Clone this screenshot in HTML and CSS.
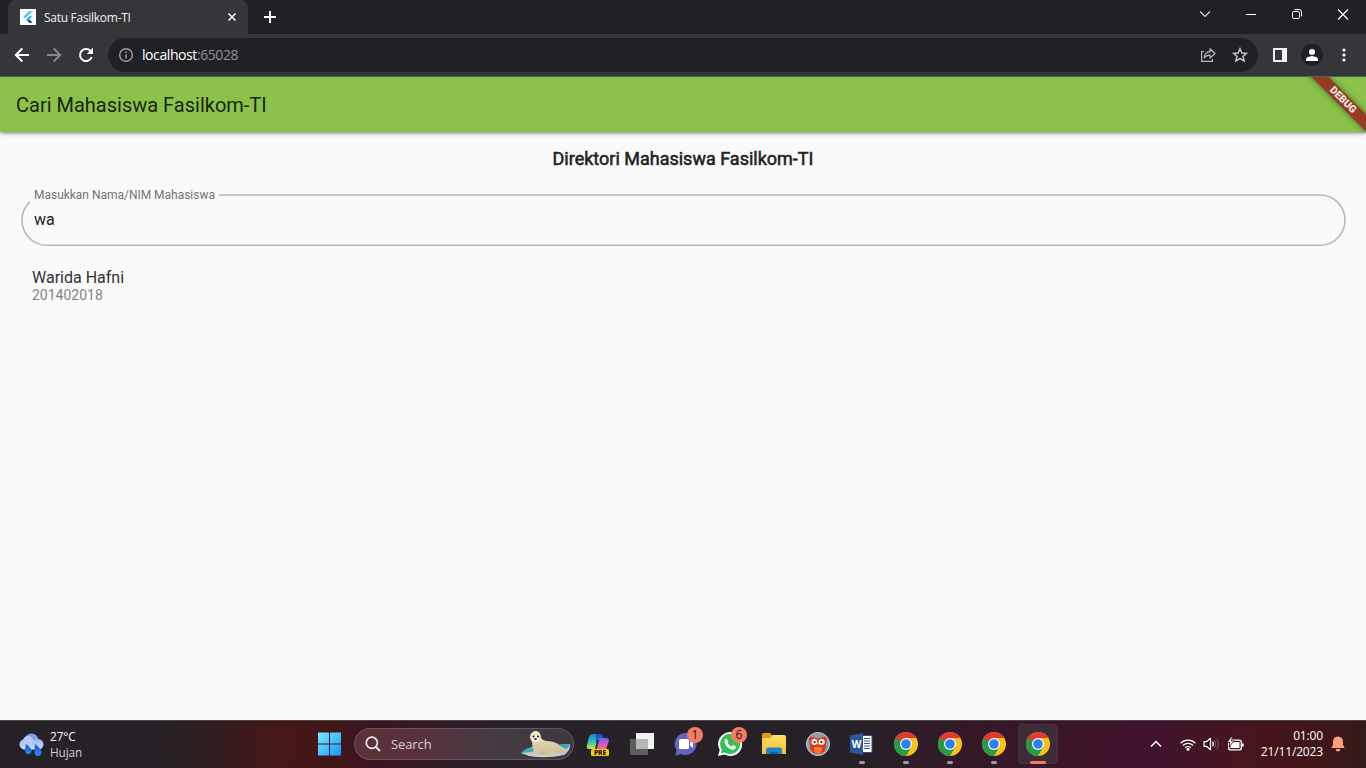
FILE: index.html
```html
<!DOCTYPE html>
<html lang="id">
<head>
<meta charset="utf-8">
<title>Satu Fasilkom-TI</title>
<link rel="stylesheet" href="styles.css">
</head>
<body>
<svg class="defs" width="0" height="0" aria-hidden="true">
  <defs>
    <linearGradient id="gWin" x1="0" y1="0" x2="1" y2="1"><stop offset="0" stop-color="#7ee8ff"/><stop offset="1" stop-color="#0f9cff"/></linearGradient>
    <linearGradient id="gCloud" x1="0" y1="0" x2="0" y2="1"><stop offset="0" stop-color="#8fb4f0"/><stop offset="1" stop-color="#d3e0f8"/></linearGradient>
    <linearGradient id="gDrop" x1="0" y1="0" x2="0" y2="1"><stop offset="0" stop-color="#1558c8"/><stop offset="1" stop-color="#2a8cff"/></linearGradient>
    <linearGradient id="gCopA" x1="0" y1="0" x2="0" y2="1"><stop offset="0" stop-color="#1b7fe0"/><stop offset=".5" stop-color="#2cc4c0"/><stop offset="1" stop-color="#d8e03c"/></linearGradient>
    <linearGradient id="gCopB" x1="0" y1="0" x2="0" y2="1"><stop offset="0" stop-color="#7a5cf0"/><stop offset=".6" stop-color="#e858b0"/><stop offset="1" stop-color="#ff8a60"/></linearGradient>
    <linearGradient id="gFolder" x1="0" y1="0" x2="0" y2="1"><stop offset="0" stop-color="#ffdf70"/><stop offset="1" stop-color="#f9bd2c"/></linearGradient>
    <linearGradient id="gSeal" x1="0" y1="0" x2="0" y2="1"><stop offset="0" stop-color="#f6ecd2"/><stop offset="1" stop-color="#cbb88e"/></linearGradient>
    <symbol id="chrome" viewBox="0 0 24 24">
      <circle cx="12" cy="12" r="12" fill="#f9c21b"/>
      <path d="M12 12 1.6 6A12 12 0 0 0 12 24L17.2 15Z" fill="#259a47"/>
      <path d="M12 12V6H22.4A12 12 0 0 0 1.6 6L6.8 15Z" fill="#df3b30"/>
      <path d="M1.6 6 6.8 15 12 12 8 9Z" fill="#259a47"/>
      <circle cx="12" cy="12" r="6" fill="#fff"/><circle cx="12" cy="12" r="4.8" fill="#2d7ff0"/>
    </symbol>
  </defs>
</svg>

<header class="tabstrip">
  <div class="tab">
    <svg class="favicon" width="16" height="16" viewBox="0 0 16 16"><rect width="16" height="16" fill="#fff"/><path d="M9.2 2H12.6L5 9.5 3.3 7.8Z" fill="#45c4f7"/><path d="M9.3 7.2H12.6L9.4 10.4 12.6 13.7H9.2L5.9 10.4Z" fill="#37b3ee"/><path d="M7.6 12.1 9.4 10.4 12.6 13.7H9.2Z" fill="#0b4f98"/></svg>
    <span class="tab-title">Satu Fasilkom-TI</span>
    <svg class="tab-close" width="8" height="8" viewBox="0 0 8 8"><path d="M.5.5 7.5 7.5M7.5.5.5 7.5" stroke="#fff" stroke-width="1.5"/></svg>
  </div>
  <svg class="newtab" width="12" height="12" viewBox="0 0 12 12"><path d="M6 0V12M0 6H12" stroke="#fff" stroke-width="2"/></svg>
  <div class="win-controls">
    <svg width="46" height="28" viewBox="0 0 46 28"><path d="M18 11.5 23 16.5 28 11.5" fill="none" stroke="#ddd" stroke-width="1.1"/></svg>
    <svg width="46" height="28" viewBox="0 0 46 28"><path d="M18 14.5H28" stroke="#fff"/></svg>
    <svg width="46" height="28" viewBox="0 0 46 28"><rect x="18.5" y="11.5" width="7" height="7" rx="1.3" fill="none" stroke="#fff"/><path d="M20.5 9.5H25.3Q27.5 9.5 27.5 11.7V16.5" fill="none" stroke="#fff"/></svg>
    <svg width="46" height="28" viewBox="0 0 46 28"><path d="M18 9.500 28 19.5M28 9.500 18 19.500" stroke="#fff" stroke-width="1.1"/></svg>
  </div>
</header>

<nav class="toolbar">
  <svg width="16" height="16" viewBox="0 0 16 16"><path d="M15 8H2M8.300 1.500 1.800 8 8.300 14.500" fill="none" stroke="#fff" stroke-width="2"/></svg>
  <svg width="16" height="16" viewBox="0 0 16 16"><path d="M1 8H14M7.700 1.500 14.200 8 7.700 14.500" fill="none" stroke="#85868a" stroke-width="2"/></svg>
  <svg width="16" height="16" viewBox="0 0 16 16"><path d="M13.700 10A6 6 0 1 1 12.300 3.800L13.500 5" fill="none" stroke="#fff" stroke-width="2"/><path d="M15 .8V7H8.800Z" fill="#fff"/></svg>
  <div class="omnibox">
    <svg width="14" height="14" viewBox="0 0 14 14"><circle cx="7" cy="7" r="6.300" fill="none" stroke="#9b9fa4" stroke-width="1.400"/><path d="M7 6.200V10.500M7 3.500V5" stroke="#9b9fa4" stroke-width="1.500"/></svg>
    <span class="url"><span class="host">localhost</span>:65028</span>
    <svg class="share" width="16" height="16" viewBox="0 0 16 16"><path d="M4.200 4.500H1.600V14.400H12.400V12" fill="none" stroke="#b7babd" stroke-width="1.200"/><path d="M10 1.800 15 6.500 10 11V8.200Q6.500 8 4.200 11 4.800 5 10 4.700Z" fill="none" stroke="#b7babd" stroke-width="1.200" stroke-linejoin="round"/></svg>
    <svg width="16" height="16" viewBox="0 0 16 16"><path d="M8 1.700 9.900 6 14.500 6.400 11 9.500 12.100 14 8 11.600 3.900 14 5 9.500 1.500 6.400 6.100 6Z" fill="none" stroke="#c1c4c7" stroke-width="1.500"/></svg>
  </div>
  <svg class="panel-icon" width="14" height="14" viewBox="0 0 14 14"><path d="M0 0H14V14H0ZM2 2V12H9V2Z" fill="#f1f3f4" fill-rule="evenodd"/></svg>
  <svg class="profile" width="22" height="22" viewBox="0 0 22 22"><circle cx="11" cy="11" r="11" fill="#202124"/><circle cx="11" cy="8" r="3" fill="#fff"/><path d="M5 17V15.500C5 13.300 8 12.300 11 12.300S17 13.300 17 15.500V17Z" fill="#fff"/></svg>
  <svg class="menu-dots" width="4" height="14" viewBox="0 0 4 14"><circle cx="2" cy="2" r="1.600" fill="#fff"/><circle cx="2" cy="7" r="1.600" fill="#fff"/><circle cx="2" cy="12" r="1.600" fill="#fff"/></svg>
</nav>

<main class="app">
  <div class="appbar"><h1>Cari Mahasiswa Fasilkom-TI</h1></div>
  <div class="debug-corner"><div class="debug-band">DEBUG</div></div>
  <h2 class="heading">Direktori Mahasiswa Fasilkom-TI</h2>
  <div class="field">
    <svg class="outline" width="1326" height="54" viewBox="0 0 1326 54"><rect x="2" y="2" width="1323" height="50.300" rx="25.100" fill="none" stroke="#b8b8b8" stroke-width="1.600"/></svg>
    <span class="field-label">Masukkan Nama/NIM Mahasiswa</span>
    <span class="field-value">wa</span>
  </div>
  <div class="result">
    <div class="name">Warida Hafni</div>
    <div class="nim">201402018</div>
  </div>
</main>

<footer class="taskbar">
  <div class="weather">
    <svg width="25" height="23" viewBox="0 0 25 23"><circle cx="12.500" cy="7.500" r="7" fill="#7ba3ea"/><rect x=".5" y="6" width="24" height="10.500" rx="5.200" fill="url(#gCloud)"/><circle cx="9" cy="8" r="5" fill="#b4cbf5"/><path d="M7 11Q13 15 12.500 18.500A3.200 3.200 0 0 1 6.200 18.500Q6 15 7 11Z" fill="url(#gDrop)"/><path d="M16 11Q23 16 22.400 19.500A3.300 3.300 0 0 1 15.600 19.500Q15 16 16 11Z" fill="url(#gDrop)"/></svg>
    <div class="weather-text"><div class="temp">27°C</div><div class="cond">Hujan</div></div>
  </div>
  <div class="apps">
    <div class="app-cell"><svg width="24" height="24" viewBox="0 0 24 24"><path d="M0 .500H11V11.500H0ZM12 .500H23V11.500H12ZM0 12.500H11V23.500H0ZM12 12.500H23V23.500H12Z" fill="url(#gWin)"/></svg></div>
    <div class="search">
      <svg width="16" height="16" viewBox="0 0 16 16"><circle cx="6.800" cy="6.800" r="5.600" fill="none" stroke="#eee" stroke-width="1.700"/><path d="M10.800 10.800 15 15" stroke="#eee" stroke-width="1.900"/></svg>
      <span>Search</span>
      <svg class="seal" width="50" height="28" viewBox="0 0 50 28"><path d="M0 23Q6 17 18 16L49 14Q50 20 43 25Q25 29 8 26Z" fill="#bfd0d8"/><path d="M0 23Q5 18 14 17L12 22ZM36 15 49 14Q48 18 45 19Z" fill="#39a9c0"/><path d="M9 8C9 3 12 1 15 1C18 1 20 4 20 8C23 13 33 9 39 16C42 19 45 20 46 22C40 24 34 23 29 24C22 26 16 24 13 20C10 17 12 14 11 12Z" fill="url(#gSeal)"/><path d="M15 17 10 25 15 25 20 19M28 21 23 26 30 26 35 22" fill="#d7c69f"/><ellipse cx="14.500" cy="9" rx="4" ry="3.200" fill="#f5f1e6"/><circle cx="12.500" cy="6.500" r="1" fill="#151515"/><circle cx="17" cy="6.500" r="1" fill="#151515"/><ellipse cx="14.500" cy="9" rx="1.300" ry="1" fill="#222"/></svg>
    </div>
    <div class="app-cell"><svg width="24" height="24" viewBox="0 0 24 24"><path d="M6 2H13Q15.500 2 14.500 5L11 15Q10 17 8 17H3Q0 17 1 13L3 5Q4 2 6 2Z" fill="url(#gCopA)"/><path d="M14 6H20Q24 6 22.500 10L20.500 16Q19.500 19 17 19H8Q10.500 18.500 11.500 15Z" fill="url(#gCopB)"/><path d="M10 2H14Q16.500 2 17.500 6H14Q12.500 6 12 8L10 13Z" fill="#1a55ca"/><path d="M11.500 8H13L10.500 16H9Z" fill="#252127"/><rect x="5" y="17" width="18" height="7" rx="1.500" fill="#f9c713"/><text x="14" y="23" class="pre">PRE</text></svg></div>
    <div class="app-cell"><svg width="24" height="24" viewBox="0 0 24 24"><rect x="6" y="1" width="18" height="16" fill="#f1f1f1"/><rect x="0" y="7" width="18" height="16" fill="#5e5e5e"/><rect x="6" y="7" width="12" height="10" fill="#b7b7b7"/></svg></div>
    <div class="app-cell"><svg width="24" height="24" viewBox="0 0 24 24"><path d="M12 1A11 11 0 1 1 7 22L1.500 23.500 2.500 18A11 11 0 0 1 12 1Z" fill="#6266c9"/><rect x="5" y="7" width="10" height="10" rx="1.500" fill="#fff"/><path d="M16 10.500 19 8V16L16 13.500Z" fill="#fff"/></svg><span class="badge">1</span></div>
    <div class="app-cell"><svg width="24" height="24" viewBox="0 0 24 24"><path d="M12 0A12 12 0 1 1 6.500 22.500L0 24 1.700 18A12 12 0 0 1 12 0Z" fill="#fff"/><path d="M12 2A10 10 0 1 1 6.800 20.500L2.800 21.300 3.800 17.500A10 10 0 0 1 12 2Z" fill="#36bf55"/><path d="M8.500 6.500Q7 6.500 6.500 9C6.500 14 12 18 15.500 17.600Q18 17 18 14.500L15 13 13.500 14.800Q11 13.500 9.500 11L10.500 9.500Z" fill="#fff"/></svg><span class="badge">6</span></div>
    <div class="app-cell"><svg width="24" height="24" viewBox="0 0 24 24"><path d="M0 3Q0 1 2 1H8L10.500 3.500V8H0Z" fill="#e39b16"/><path d="M0 6H8L11 3H22Q24 3 24 5V22H0Z" fill="url(#gFolder)"/><path d="M4 22V18Q4 15.500 6.500 15.500H17.500Q20 15.500 20 18V22Z" fill="#1686d3"/><path d="M8 22V20H16V22Z" fill="#0d64a8"/></svg></div>
    <div class="app-cell"><svg width="24" height="24" viewBox="0 0 24 24"><circle cx="12" cy="12" r="11.500" fill="#909ca5" stroke="#c7cdd1"/><path d="M4 4.500 12 6.500 20 4.500Q21.500 9 20 12 21 21.500 12 22 3 21.500 4 12 2.500 9 4 4.500Z" fill="#df351e"/><path d="M8 15H16Q17 21 12 22 7 21 8 15Z" fill="#f87724"/><circle cx="8.300" cy="10" r="3" fill="#fff"/><circle cx="15.700" cy="10" r="3" fill="#fff"/><circle cx="8.700" cy="10" r="1.100" fill="#222"/><circle cx="15.300" cy="10" r="1.100" fill="#222"/><path d="M11 11H13L12 14Z" fill="#f9c02c"/></svg></div>
    <div class="app-cell"><svg width="24" height="24" viewBox="0 0 24 24"><path d="M12 3.500H22V20.500H12Z" fill="#fff" stroke="#294f93"/><path d="M14 6.500H20M14 9H20M14 11.500H20M14 14H20M14 16.500H20" stroke="#2b5797" stroke-width="1.200"/><path d="M0 3.500 13 1V23L0 20.500Z" fill="#2b5797"/><text x="6.500" y="15.700" class="word-w">W</text></svg><i class="dot"></i></div>
    <div class="app-cell"><svg width="24" height="24"><use href="#chrome"/></svg><i class="dot"></i></div>
    <div class="app-cell"><svg width="24" height="24"><use href="#chrome"/></svg><i class="dot"></i></div>
    <div class="app-cell"><svg width="24" height="24"><use href="#chrome"/></svg><i class="dot"></i></div>
    <div class="app-cell active"><svg width="24" height="24"><use href="#chrome"/></svg><i class="dot"></i></div>
  </div>
  <div class="tray">
    <svg width="12" height="8" viewBox="0 0 12 8"><path d="M1 6.500 6 1.500 11 6.500" fill="none" stroke="#fff" stroke-width="1.500"/></svg>
    <svg class="wifi" width="16" height="13" viewBox="0 0 16 13"><g fill="none" stroke="#fff" stroke-width="1.300"><path d="M.7 5.200A10.300 10.300 0 0 1 15.300 5.200M3 7.500A7.100 7.100 0 0 1 13 7.500M5.200 9.700A4 4 0 0 1 10.800 9.700"/></g><circle cx="8" cy="11.300" r="1.500" fill="#fff"/></svg>
    <svg class="sound" width="17" height="14" viewBox="0 0 17 14"><path d="M1 4.700H3.500L7.500 1.300V12.700L3.500 9.300H1Z" fill="none" stroke="#fff" stroke-width="1.200" stroke-linejoin="round"/><path d="M9.500 4.700Q11.300 7 9.500 9.300" fill="none" stroke="#fff" stroke-width="1.200"/><path d="M11.500 3Q14.500 7 11.500 11M13.500 1.500Q17.500 7 13.500 12.500" fill="none" stroke="#75545a"/></svg>
    <svg class="battery" width="17" height="14" viewBox="0 0 17 14"><rect x="1.700" y="3.100" width="12.600" height="9.800" rx="2" fill="none" stroke="#fff" stroke-width="1.300"/><rect x="3.500" y="5" width="9" height="6" fill="#fff"/><path d="M15 6.500H16.700V9.500H15Z" fill="#fff"/><path d="M4.500 -.5 0 5.500H3L2 10 7 4H4.300L5.500 -.5Z" fill="#fff" stroke="#46131c" stroke-width=".8"/></svg>
    <div class="clock"><div>01:00</div><div>21/11/2023</div></div>
    <svg class="bell" width="14" height="16" viewBox="0 0 14 16"><path d="M7 .5Q12 .8 12 6V9L13.700 12H.3L2 9V6Q2 .8 7 .5ZM4.500 13H9.500Q9 15.500 7 15.500T4.500 13Z" fill="#ffa07d"/></svg>
  </div>
</footer>
</body>
</html>
```
FILE: styles.css
```css
* { box-sizing: border-box; }
body {
  margin: 0;
  width: 1366px;
  height: 768px;
  overflow: hidden;
  display: flex;
  flex-direction: column;
  font-family: "Open Sans", "Noto Sans", sans-serif;
}
svg { display: block; flex: none; }
.defs { position: absolute; }

/* Browser chrome */
.tabstrip {
  height: 34px;
  flex: none;
  display: flex;
  background: #202124;
  padding-left: 8px;
}
.tab {
  width: 240px;
  display: flex;
  align-items: center;
  padding: 0 12px;
  background: #35363a;
  border-radius: 8px 8px 0 0;
  color: #f1f3f4;
  font-size: 12px;
}
.tab-title { margin-left: 8px; letter-spacing: -0.28px; white-space: nowrap; }
.tab-close { margin-left: auto; }
.newtab { margin: 11px 0 0 16px; }
.win-controls { display: flex; margin-left: auto; }
.toolbar {
  height: 43px;
  flex: none;
  display: flex;
  align-items: center;
  gap: 16px;
  padding: 0 20px 1px 14px;
  background: #35363a;
  border-bottom: 1px solid #5b5c5f;
}
.omnibox {
  width: 1150px;
  height: 34px;
  margin-left: -2px;
  display: flex;
  align-items: center;
  padding: 0 10px 0 11px;
  border-radius: 17px;
  background: #202124;
}
.url { margin-left: 9px; font-size: 14px; letter-spacing: -0.42px; color: #8f9296; }
.host { color: #fff; }
.share { margin-left: auto; margin-right: 16px; }
.panel-icon { margin-left: -1px; }
.profile { margin-left: -2px; }
.menu-dots { margin-left: 3px; }

/* Page */
.app {
  position: relative;
  flex: 1;
  overflow: hidden;
  background: #fafafa;
  font-family: Roboto, sans-serif;
}
.appbar {
  height: 55px;
  display: flex;
  align-items: center;
  padding: 1px 16px 0;
  background: #8bc34a;
  box-shadow: 0 1px 4px rgba(0, 0, 0, .5);
}
h1 { margin: 0; font-size: 20px; font-weight: 400; line-height: 24px; color: #1b230f; }
.debug-corner {
  position: absolute;
  top: 0;
  right: 0;
  width: 70px;
  height: 56px;
  overflow: hidden;
}
.debug-band {
  position: absolute;
  top: 17px;
  right: -37px;
  width: 120px;
  height: 12px;
  transform: rotate(45deg);
  background: #963b23;
  box-shadow: 0 0 6px rgba(0, 0, 0, .5);
  color: #f5e9e6;
  font-size: 10.2px;
  font-weight: 900;
  line-height: 12px;
  text-align: center;
}
.heading {
  margin: 16px 0 0;
  font-size: 18px;
  font-weight: 400;
  line-height: 22px;
  text-align: center;
  color: #222;
  -webkit-text-stroke: .55px #222;
}
.field { position: relative; height: 54px; margin: 23px 20px 0; }
.outline { position: absolute; inset: 0; }
.field-label {
  position: absolute;
  left: 10px;
  top: -5px;
  width: 189px;
  padding-left: 4px;
  background: #fafafa;
  font-size: 12px;
  line-height: 15px;
  letter-spacing: -.02px;
  white-space: nowrap;
  color: #737373;
}
.field-value {
  position: absolute;
  left: 14px;
  top: 17px;
  font-size: 16px;
  line-height: 20px;
  color: #222;
}
.result { padding: 21px 32px; }
.name { font-size: 16px; line-height: 20px; color: #303030; }
.nim { font-size: 14px; line-height: 15px; color: #858585; }

/* Taskbar */
.taskbar {
  height: 48px;
  flex: none;
  display: grid;
  grid-template-columns: 308px 752px 306px;
  border-top: 1px solid #4a4648;
  padding-bottom: 2px;
  color: #fff;
  background: linear-gradient(90deg, #252127 0, #252127 150px, #2d2022 190px, #461716 280px, #421617 325px, #3c1524 380px, #282128 500px, #252127 850px, #321a27 950px, #3e1428 1090px, #40142e 1150px, #47151c 1250px, #421617 1310px, #351a1c 1366px);
}
.weather { display: flex; align-items: center; padding-left: 19px; }
.weather-text { margin-left: 6px; font-size: 11.800px; line-height: 16px; letter-spacing: -.1px; }
.cond { color: #d0cdd0; }
.apps { display: flex; }
.app-cell {
  position: relative;
  width: 44px;
  height: 46px;
  display: flex;
  align-items: center;
  justify-content: center;
}
.app-cell.active::before {
  content: "";
  position: absolute;
  inset: 3px 2px 3px;
  border: 1px solid #47333d;
  border-radius: 4px;
  background: #3d2b35;
}
.app-cell svg { position: relative; }
.dot {
  position: absolute;
  left: 19px;
  bottom: 3px;
  width: 6px;
  height: 3px;
  border-radius: 2px;
  background: #a09ca1;
}
.active .dot { left: 14px; width: 16px; background: #f47b62; }
.badge {
  position: absolute;
  left: 23px;
  top: 6px;
  width: 16px;
  height: 16px;
  border-radius: 50%;
  background: #f47c63;
  color: #301513;
  font-size: 12px;
  line-height: 16px;
  text-align: center;
}
.pre { font: 800 6.500px "Open Sans", sans-serif; text-anchor: middle; fill: #201a05; }
.word-w { font: 700 10px "Open Sans", sans-serif; text-anchor: middle; fill: #fff; }
.search {
  width: 220px;
  height: 32px;
  margin: 7px 2px 0;
  display: flex;
  align-items: center;
  padding: 0 2px 0 10px;
  border: 1px solid rgba(255, 255, 255, .16);
  border-radius: 16px;
  background: linear-gradient(90deg, #5a3237, #59313f 30%, #473b42 60%, #3c393f);
  font-size: 13px;
  color: #d7cfd2;
}
.search span { margin-left: 10px; letter-spacing: -.1px; }
.seal { margin-left: auto; }
.tray { display: flex; align-items: center; padding-left: 90px; }
.wifi { margin-left: 18px; }
.sound { margin-left: 7px; }
.battery { margin-left: 7px; }
.clock {
  width: 79px;
  font-size: 12px;
  line-height: 16px;
  letter-spacing: -.15px;
  text-align: right;
}
.bell { margin-left: 8px; }
```
